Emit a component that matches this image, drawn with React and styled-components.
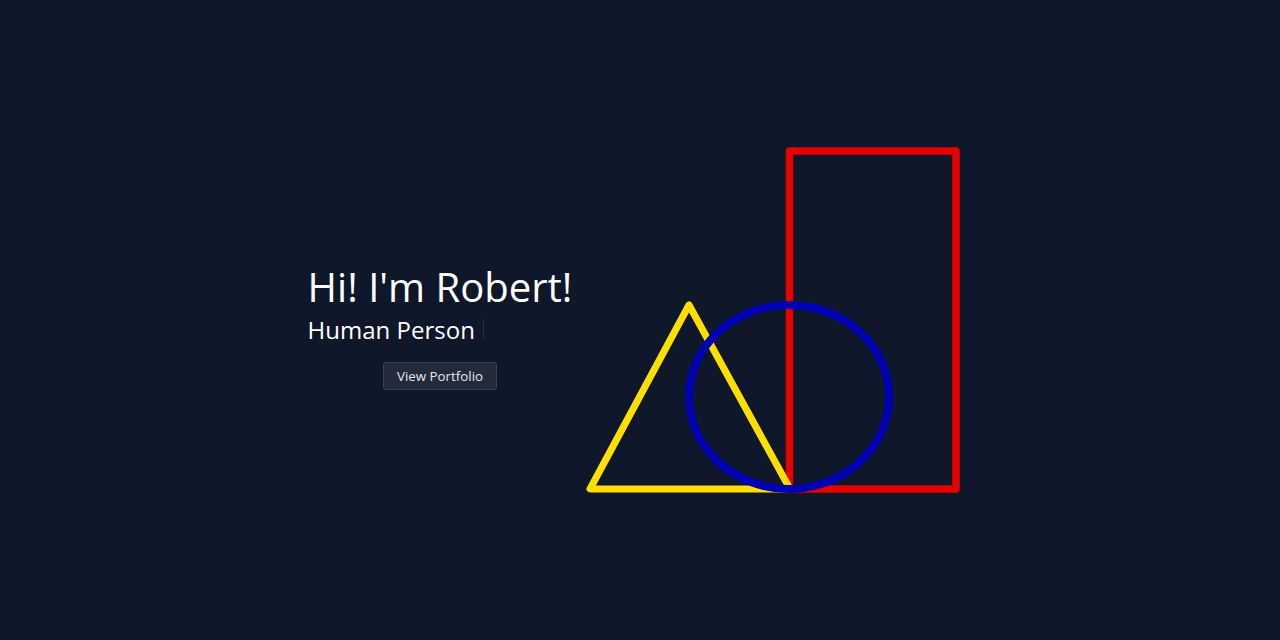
import React from "react";
import styled, { createGlobalStyle } from "styled-components";

const Global = createGlobalStyle`
  html, body { margin: 0; padding: 0; background: #0f172a; }
  body { font-family: "Open Sans", "Noto Sans", sans-serif; color: #f8fafc; }
`;

const Page = styled.main`
  height: 640px;
  display: flex;
  align-items: center;
  justify-content: center;
  gap: 11px;
  padding-right: 9px;
  box-sizing: border-box;
`;

const Intro = styled.section`
  display: flex;
  flex-direction: column;
  margin-top: 12px;
`;

const Title = styled.h1`
  margin: 0;
  font-size: 40px;
  line-height: 48px;
  font-weight: 400;
  color: #ffffff;
  white-space: nowrap;
`;

const Subtitle = styled.h2`
  margin: 4px 0 0;
  font-size: 24px;
  line-height: 29px;
  font-weight: 400;
  color: #ffffff;
  display: flex;
  align-items: center;
`;

const Caret = styled.span`
  display: inline-block;
  width: 1px;
  height: 20px;
  margin-left: 8px;
  background: #283142;
`;

const Button = styled.button`
  align-self: center;
  margin-top: 18px;
  font-family: inherit;
  font-size: 13.333px;
  line-height: 18px;
  padding: 4px 13px;
  color: #e2e8f0;
  background: #232b3b;
  border: 1px solid #374151;
  border-radius: 3px;
  cursor: pointer;
`;

const Shapes = styled.svg`
  width: 380px;
  height: 350px;
  display: block;
  flex-shrink: 0;
`;

export default function App() {
  return (
    <>
      <Global />
      <Page>
        <Intro>
          <Title>Hi! I'm Robert!</Title>
          <Subtitle>
            Human Person
            <Caret />
          </Subtitle>
          <Button>View Portfolio</Button>
        </Intro>
        <Shapes viewBox="0 0 380 350" fill="none">
          <rect x="206.5" y="6" width="166.5" height="338" stroke="#e60000" strokeWidth="7.5" strokeLinejoin="round" />
          <polygon points="106,160 7,344 207,344" stroke="#ffde00" strokeWidth="7" strokeLinejoin="round" />
          <ellipse cx="206" cy="252" rx="100" ry="92" stroke="#0000b4" strokeWidth="8" />
        </Shapes>
      </Page>
    </>
  );
}
